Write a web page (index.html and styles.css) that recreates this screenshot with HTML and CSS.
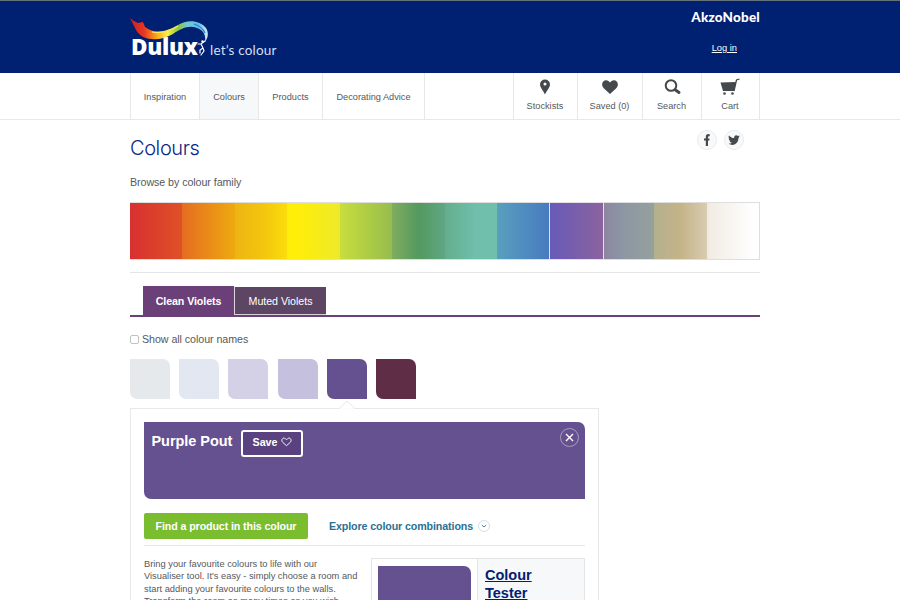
FILE: index.html
```html
<!DOCTYPE html>
<html lang="en">
<head>
<meta charset="utf-8">
<title>Dulux Colours</title>
<link rel="stylesheet" href="styles.css">
</head>
<body>
<header class="masthead">
  <div class="wrap masthead-inner">
    <a class="brand">
      <svg class="ribbon" viewBox="0 0 82 42" width="82" height="42" aria-hidden="true">
        <defs>
          <linearGradient id="rainbow" x1="0" x2="1" y1="0" y2="0">
            <stop offset="0" stop-color="#c71c24"/><stop offset=".18" stop-color="#ea3520"/><stop offset=".34" stop-color="#f9a51b"/><stop offset=".48" stop-color="#fff044"/><stop offset=".62" stop-color="#8cc63f"/><stop offset=".74" stop-color="#70cbd5"/><stop offset=".88" stop-color="#63bce9"/><stop offset="1" stop-color="#d8ecf7"/>
          </linearGradient>
        </defs>
        <path fill="url(#rainbow)" d="M0 2 4 5 8 7 13 6 15 11C25 19 38 15 48 9C57 3 70 4 76 12C79 17 78 22 75 26C76 20 74 14 67 12C59 9 52 12 43 18C29 26 12 25 6 14Z"/>
        <path fill="none" stroke="#ffe45b" stroke-width="1.200" d="M22 16C31 18 40 15 48 10"/>
        <path fill="none" stroke="#1680bd" stroke-width="1.100" d="M64 8C70 10 73 12 75 17"/>
        <path fill="none" stroke="#fff" stroke-width="1.200" stroke-linecap="round" d="M68 28 71 28 75 25M71 28 73 32 70 34 70 37M73 32 74 35 71 39"/>
        <circle cx="72.500" cy="25.500" r="1.200" fill="#fff"/>
      </svg>
      <span class="name">Dulux</span>
      <span class="motto">let’s colour</span>
    </a>
    <div class="account"><b class="akzo">AkzoNobel</b><a class="login">Log in</a></div>
  </div>
</header>
<nav class="navbar">
  <div class="wrap nav-inner">
    <a class="tab w69">Inspiration</a><a class="tab w59 current">Colours</a><a class="tab w64">Products</a><a class="tab w102">Decorating Advice</a>
    <span class="spacer"></span>
    <a class="tool w64"><svg width="20" height="18" viewBox="0 0 20 18"><path fill="#45494c" fill-rule="evenodd" d="M10 1.500a5 5 0 0 0-5 5c0 3 3 5.700 5 10 2-4.300 5-7 5-10a5 5 0 0 0-5-5Zm0 3a1.500 1.500 0 1 1 0 3 1.500 1.500 0 0 1 0-3Z"/></svg>Stockists</a>
    <a class="tool w65"><svg width="20" height="18" viewBox="0 0 20 18"><path fill="#45494c" d="M10 16 4 10.600C-.5 6 4 .300 8.500 3.100L10 4.500l1.500-1.400C16 .300 20.500 6 16 10.600Z"/></svg>Saved (0)</a>
    <a class="tool w59"><svg width="20" height="18" viewBox="0 0 20 18"><circle cx="9" cy="7.500" r="5.300" fill="none" stroke="#45494c" stroke-width="2"/><path stroke="#45494c" stroke-width="3" stroke-linecap="round" d="m13.500 12 3.500 2.500"/></svg>Search</a>
    <a class="tool w58"><svg width="20" height="18" viewBox="0 0 20 18"><path fill="#45494c" d="M.5 4.500 16 4l-2 9H3Z"/><path fill="none" stroke="#45494c" stroke-width="1.300" d="m14 13 2.500-11 3-1"/><circle cx="4.500" cy="15.500" r="1.300" fill="#45494c"/><circle cx="12.500" cy="15.500" r="1.300" fill="#45494c"/></svg>Cart</a>
  </div>
</nav>
<main class="main">
 <div class="wrap">
  <div class="heading"><h1>Colours</h1>
    <div class="social">
      <a><svg width="18" height="18" viewBox="0 0 18 18"><path fill="#45494c" d="M7.800 15V9.500H6v-2h1.800V6c0-2.300 1.300-3.200 3.900-2.800v2C10.500 5 10 5.200 10 6v1.500h1.600l-.3 2H10V15Z"/></svg></a>
      <a><svg width="18" height="18" viewBox="0 0 18 18"><path fill="#45494c" d="M14.700 5.300l-1.200.4c.5-.4.800-.8.900-1.300l-1.500.6c-1.700-1.700-4.200-.3-3.700 2C7 7 5.200 5.900 4 4.400c-.8 1.300-.3 2.700.7 3.400l-1-.3c0 1.200.8 2.200 2 2.500l-1 .1c.3 1 1.200 1.600 2.200 1.700-1 .8-2.200 1.100-3.500 1 4.900 2.900 10.100-.2 10.100-5.800Z"/></svg></a>
    </div>
  </div>
  <p class="browse">Browse by colour family</p>
  <div class="families">
    <i class="red"></i><i class="orange"></i><i class="gold"></i><i class="yellow"></i><i class="lime"></i><i class="green"></i><i class="teal"></i><i class="blue"></i><i class="violet"></i><i class="grey"></i><i class="neutral"></i><i class="white"></i>
  </div>
  <div class="tabs"><a class="active">Clean Violets</a><a class="muted">Muted Violets</a></div>
  <label class="show"><input type="checkbox"><span>Show all colour names</span></label>
  <div class="swatches"><i class="s1"></i><i class="s2"></i><i class="s3"></i><i class="s4"></i><i class="s5"></i><i class="s6"></i></div>
  <section class="details">
    <svg class="pointer" width="16" height="9" viewBox="0 0 16 9"><path fill="#fff" stroke="#e6e8e9" d="M0 8.500 8 1l8 7.500"/><path stroke="#fff" stroke-width="1.500" d="M1 9h14"/></svg>
    <div class="hero">
      <h2>Purple Pout</h2>
      <button class="save">Save <svg width="11" height="10" viewBox="0 0 12 10"><path fill="none" stroke="#fff" d="M6 9 2 5.500C-.8 2.500 2.500-.8 5 1.500l1 1 1-1C9.500-.8 12.800 2.500 10 5.500Z"/></svg></button>
      <a class="close"><svg width="9" height="9" viewBox="0 0 9 9"><path stroke="#fff" stroke-width="1.400" d="m1 1 7 7M8 1 1 8"/></svg></a>
    </div>
    <div class="actions"><a class="find">Find a product in this colour</a><a class="explore"><span>Explore colour combinations</span><svg width="12" height="12" viewBox="0 0 12 12"><circle cx="6" cy="6" r="5.500" fill="#fff" stroke="#d0e0e8"/><path fill="none" stroke="#4b86a6" d="m3.800 5 2.200 2 2.200-2"/></svg></a></div>
    <div class="columns">
      <p><span>Bring your favourite colours to life with our</span><br><span>Visualiser tool. It's easy - simply choose a room and</span><br><span>start adding your favourite colours to the walls.</span><br><span>Transform the room as many times as you wish</span></p>
      <div class="tester"><div class="sample"><i></i></div><a>Colour<br>Tester</a></div>
    </div>
  </section>
 </div>
</main>
</body>
</html>
```
FILE: styles.css
```css
* { box-sizing: border-box; }
html, body { height: 600px; overflow: hidden; }
body { margin: 0; background: #fff; font-family: "Liberation Sans", Arial, sans-serif; color: #55595c; }
h1, h2, p { margin: 0; font-weight: normal; }
svg { display: block; flex: none; }
.wrap { width: 630px; margin-left: 130px; }
.masthead { height: 73px; background: #002072; border-top: 1px solid #65727c; }
.masthead-inner { display: flex; justify-content: space-between; }
.brand { position: relative; display: flex; align-items: baseline; height: 72px; color: #fff; padding-top: 32px; }
.ribbon { position: absolute; left: 0; top: 15px; }
.name { width: 80px; padding-left: 1px; font: 800 22.500px/28px "Open Sans", sans-serif; letter-spacing: -.3px; }
.motto { margin-top: -1px; font: 13.500px/20px Lato, sans-serif; letter-spacing: .2px; white-space: nowrap; color: #d7dff5; }
.account { display: flex; flex-direction: column; align-items: flex-end; color: #fff; }
.akzo { margin-top: 7px; font: 900 13.500px/18px Lato, sans-serif; letter-spacing: .2px; }
.login { margin: 16px 23px 0 0; font-size: 9.300px; line-height: 13px; text-decoration: underline; }
.navbar { height: 47px; border-bottom: 1px solid #e6e8e9; }
.nav-inner { display: flex; height: 46px; border-left: 1px solid #e6e8e9; font-size: 9.200px; }
.tab, .tool { display: flex; align-items: center; justify-content: center; border-right: 1px solid #e6e8e9; white-space: nowrap; }
.tab { padding-top: 1px; }
.tool { flex-direction: column; justify-content: flex-start; gap: 4px; padding: 5px 1px 0 0; line-height: 12px; }
.current { background: #f7f8fa; }
.spacer { flex: 1; border-right: 1px solid #e6e8e9; }
.w69 { width: 69px; } .w59 { width: 59px; } .w58 { width: 58px; } .w102 { width: 102px; } .w64 { width: 64px; } .w65 { width: 65px; }
.main { height: 480px; overflow: hidden; }
.heading { display: flex; justify-content: space-between; height: 56px; }
h1 { padding-top: 15px; color: #0a2787; font: 300 20px/26px Inter, sans-serif; letter-spacing: -.4px; }
.social { display: flex; gap: 7px; padding: 10px 16px 0 0; }
.social a { display: grid; place-items: center; width: 20px; height: 20px; border: 1px solid #e9ebed; border-radius: 50%; background: #f8f9fb; }
.browse { height: 26px; font-size: 10.700px; line-height: 13px; letter-spacing: -.07px; }
.families { display: grid; grid-template-columns: repeat(12, 1fr); height: 58px; border: 1px solid #dedede; border-left: 0; }
.red { background: linear-gradient(90deg, #d83030, #df5027); }
.orange { background: linear-gradient(90deg, #e66c21, #edaa10); }
.gold { background: linear-gradient(90deg, #eeb413, #f2c40e 50%, #fbdc0b); }
.yellow { background: linear-gradient(90deg, #ffee08 20%, #edea2b); }
.lime { background: linear-gradient(90deg, #c8de3d, #96bd4d); }
.green { background: linear-gradient(90deg, #80ad60, #54995f 50%, #5fa785); }
.teal { background: linear-gradient(90deg, #64ae8c, #70bfad 60%, #70bfad); }
.blue { background: linear-gradient(90deg, #599fbe, #477bc0); }
.violet { position: relative; margin: -1px -2px -1px 0; border: 1px solid #e5e1e8; background: linear-gradient(90deg, #675ab8, #8b639f); }
.grey { background: linear-gradient(90deg, #8d84a1, #8c97a4 40%, #94a19b); }
.neutral { background: linear-gradient(90deg, #b3b08e, #c5b388 50%, #d8ccb0); }
.white { background: linear-gradient(90deg, #f0ebe2, #fff 90%); }
.tabs { display: flex; height: 45px; margin-top: 12px; padding: 13px 0 0 13px; border-top: 1px solid #e3e5e6; border-bottom: 2px solid #6b3f77; color: #fff; font-size: 10.700px; }
.tabs a { display: grid; place-items: center; letter-spacing: -.05px; }
.tabs .active { width: 91px; background: #6b3f77; font-weight: bold; letter-spacing: -.1px; }
.muted { width: 92px; height: 28px; border-left: 1px solid #dcd5df; border-top: 1px solid #fff; background: #5c4663; box-shadow: 0 1px #d5cfd8; }
.show { display: flex; align-items: center; gap: 3px; height: 16px; margin-top: 14px; font-size: 10.700px; letter-spacing: -.06px; }
.show input { appearance: none; width: 9px; height: 9px; margin: 0; border: 1px solid #bfc2c4; border-radius: 2px; }
.swatches { display: flex; gap: 9.200px; height: 40px; margin-top: 12px; }
.swatches i { width: 40px; height: 40px; border-radius: 0 7px 0 7px; }
.s1 { background: #e5e9eb; } .s2 { background: #e2e7f1; } .s3 { background: #d4d0e5; } .s4 { background: #c6c0df; } .s5 { background: #655190; } .s6 { background: #602d47; }
.details { position: relative; width: 469px; height: 230px; margin-top: 9px; padding: 13px 13px 0; border: 1px solid #e6e8e9; }
.pointer { position: absolute; left: 208px; top: -9px; }
.hero { position: relative; display: flex; align-items: flex-start; width: 441px; height: 77px; border-radius: 0 7px 0 7px; background: #655190; color: #fff; }
h2 { width: 97px; padding: 10px 0 0 7.500px; font-size: 14.500px; line-height: 19px; font-weight: bold; white-space: nowrap; letter-spacing: -.05px; }
.save { display: flex; align-items: center; justify-content: center; gap: 4px; width: 62px; height: 27px; margin-top: 7.500px; padding: 0 0 2px 1px; border: 2px solid #fff; border-radius: 3px; background: #59427f; color: #fff; font: bold 10.700px "Liberation Sans", sans-serif; }
.close { position: absolute; right: 6px; top: 6px; display: grid; place-items: center; width: 19px; height: 19px; border: 1px solid #aa9bc4; border-radius: 50%; }
.actions { display: flex; align-items: center; height: 47px; border-bottom: 1px solid #e6e8e9; font-size: 10.700px; font-weight: bold; letter-spacing: -.12px; }
.find { display: grid; place-items: center; width: 164px; height: 26px; margin-top: 8px; border-radius: 2px; background: #7abd2e; color: #fff; }
.explore { display: flex; align-items: center; gap: 5px; margin: 8px 0 0 21px; color: #2a7195; }
.columns { display: flex; justify-content: space-between; padding-top: 12px; }
.columns p { font-size: 9.300px; line-height: 12.300px; white-space: nowrap; }
.tester { display: flex; width: 214px; height: 110px; border: 1px solid #e3e5e6; background: #f7f8fa; }
.sample { width: 106px; padding: 7px 0 0 6px; border-right: 1px solid #e3e5e6; background: #fff; }
.sample i { display: block; width: 93px; height: 93px; border-radius: 0 7px 0 7px; background: #655190; }
.tester a { padding: 7px 0 0 7px; color: #002072; font-size: 14.500px; line-height: 18px; font-weight: bold; text-decoration: underline; }
```
